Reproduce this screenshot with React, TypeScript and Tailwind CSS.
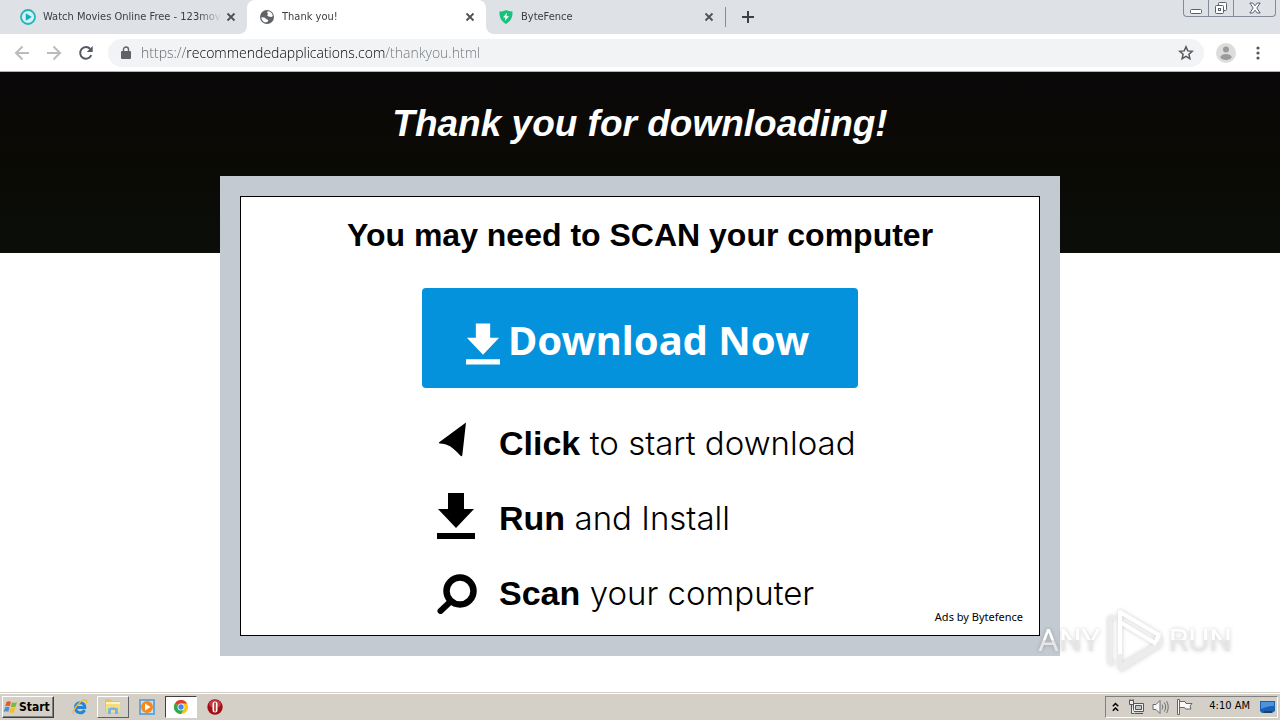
import React, { ReactNode } from "react";

type TabProps = {
  title: string;
  icon: ReactNode;
  className?: string;
};

const CloseIcon = () => (
  <svg width="10" height="10" viewBox="0 0 10 10" stroke="#4d5156" strokeWidth="1.8">
    <path d="M1.5 1.5l7 7M8.5 1.5l-7 7" />
  </svg>
);

const Tab = ({ title, icon, className }: TabProps) => (
  <div className={`flex h-[34px] w-[239px] items-center pr-[11px] pl-3 ${className ?? ""}`}>
    <span className="mr-[7px] shrink-0">{icon}</span>
    <span className="flex-1 overflow-hidden mask-r-from-[155px] font-['DejaVu_Sans_Condensed','Noto_Sans',sans-serif] text-[11px] leading-4 whitespace-nowrap text-[#3c4043]">
      {title}
    </span>
    <button type="button" aria-label={`Close ${title}`} className="ml-1 shrink-0">
      <CloseIcon />
    </button>
  </div>
);

const PlayIcon = () => (
  <svg width="16" height="16" viewBox="0 0 16 16">
    <circle cx="8" cy="8" r="7" fill="#d5f1f1" stroke="#20b5bb" strokeWidth="1.8" />
    <path d="M5.8 4.3v7.4L11.8 8z" fill="#14a9c4" />
  </svg>
);

const GlobeIcon = () => (
  <svg width="16" height="16" viewBox="0 0 16 16">
    <circle cx="8" cy="8" r="7" fill="#5f6368" />
    <path d="M8.5 2.2c2.8 0 5 2 5.3 4.8-.8.9-1.6 1.2-2.6.8L9.500 7.500 8 6.200l1.200-1.300-1-1zM2.300 8.200l3.200.4 2.500 1.800 1.300.6-.6 1.700-2.500.8C3.800 12.500 2.400 10.600 2.300 8.200z" fill="#fff" />
  </svg>
);

const ShieldIcon = () => (
  <svg width="16" height="16" viewBox="0 0 16 16">
    <path d="M8 1c2 1.100 4.200 1.500 6.500 1.500.3 5.500-1.500 9.500-6.500 12.500C3 12 1.200 8 1.500 2.500 3.800 2.500 6 2.100 8 1z" fill="#17c37b" />
    <path d="M9 3.800L5 8.500h2.500L6.800 12 11 7.200H8.400z" fill="#fff" />
  </svg>
);

const DownloadIcon = ({ className }: { className?: string }) => (
  <svg viewBox="0 0 38 46" fill="currentColor" className={className}>
    <path d="M11 0h16v16h10L19 35 1 16h10zM0 40h38v6H0z" />
  </svg>
);

const PointerIcon = () => (
  <svg width="40" height="46" viewBox="0 0 40 46">
    <path d="M29 4.500L2.500 24c-1 .8-.8 1.300.3 1.500 8 .6 12.500 3 20.500 12 .8.9 1.800.9 2-.3z" />
  </svg>
);

const SearchIcon = () => (
  <svg width="40" height="46" viewBox="0 0 40 46" fill="none" stroke="#000">
    <circle cx="23" cy="23" r="13.500" strokeWidth="6.500" />
    <path d="M13 34L3.500 43" strokeWidth="6" strokeLinecap="round" />
  </svg>
);

const Watermark = () => (
  <div className="pointer-events-none absolute right-12 bottom-4 flex h-[72px] w-[194px] items-center justify-between font-['Roboto',sans-serif] text-[32px] leading-[38px] drop-shadow-[0_0_2px_rgba(0,0,0,0.2)]">
    <span className="bg-linear-to-b from-white from-50% to-[#e6e6e6] to-50% bg-clip-text text-transparent">ANY</span>
    <svg width="56" height="64" viewBox="0 0 56 64" fill="none" strokeLinejoin="round" className="shrink-0">
      <path d="M7 55H3V10h5M13 40v18l36-21" stroke="#ececec" strokeWidth="4" />
      <path d="M13 62l40-25v-8" stroke="#ececec" strokeWidth="4" />
      <path d="M13 46V4l39 23-4 8L13 14" stroke="#fff" strokeWidth="4" />
    </svg>
    <span className="bg-linear-to-b from-white from-50% to-[#e6e6e6] to-50% bg-clip-text text-transparent">RUN</span>
  </div>
);

const steps = [
  { icon: <PointerIcon />, bold: "Click", text: "to start download" },
  { icon: <DownloadIcon className="h-[46px] w-[38px]" />, bold: "Run", text: "and Install" },
  { icon: <SearchIcon />, bold: "Scan", text: "your computer" },
];

const BrowserChrome = () => (
  <header className="shrink-0 border-b border-[#b3b3b0] bg-white">
    <div className="flex h-[34px] bg-white">
      <div className="rounded-br-lg bg-[#dee1e6] pl-2">
        <Tab title="Watch Movies Online Free - 123movi" icon={<PlayIcon />} />
      </div>
      <div className="bg-[#dee1e6]">
        <Tab title="Thank you!" icon={<GlobeIcon />} className="rounded-t-lg bg-white" />
      </div>
      <div className="flex flex-1 items-center rounded-bl-lg bg-[#dee1e6]">
        <Tab title="ByteFence" icon={<ShieldIcon />} />
        <div className="h-5 w-px bg-[#878b90]" />
        <button type="button" aria-label="New tab" className="ml-[15px]">
          <svg width="14" height="14" viewBox="0 0 14 14" stroke="#3c4043" strokeWidth="2">
            <path d="M7 1v12M1 7h12" />
          </svg>
        </button>
        <div className="mr-1 ml-auto flex h-[17px] self-start rounded-b-[4px] border border-t-0 border-[#868b98]">
          <button type="button" aria-label="Minimize" className="flex w-[25px] items-center justify-center border-r border-[#868b98]">
            <svg width="12" height="14" viewBox="0 0 12 14" fill="#fff" stroke="#5a5f6c">
              <rect x=".5" y="8.500" width="11" height="4" rx="1" />
            </svg>
          </button>
          <button type="button" aria-label="Restore" className="flex w-[25px] items-center justify-center border-r border-[#868b98]">
            <svg width="14" height="14" viewBox="0 0 14 14" fill="#fff" stroke="#5a5f6c">
              <rect x="4.500" y="1.500" width="8" height="8" rx="1" />
              <rect x="1.500" y="4.500" width="8" height="8" rx="1" />
              <rect x="4.500" y="7.500" width="2" height="2" />
            </svg>
          </button>
          <button type="button" aria-label="Close" className="flex w-[41px] items-center justify-center">
            <svg width="12" height="12" viewBox="0 0 12 12" fill="#fff" stroke="#5a5f6c">
              <path d="M.8 1h3L6 3.800 8.200 1h3L7.800 6l3.400 5h-3L6 8.200 3.800 11h-3L4.200 6z" />
            </svg>
          </button>
        </div>
      </div>
    </div>

    <div className="flex h-[37px] items-center px-3">
      <button type="button" aria-label="Back" className="w-8 pl-[2px]">
        <svg width="16" height="16" viewBox="0 0 16 16" fill="none" stroke="#bbbcbe" strokeWidth="2">
          <path d="M15 8H2.500M8.500 1.500L2 8l6.500 6.500" />
        </svg>
      </button>
      <button type="button" aria-label="Forward" className="w-8 pl-[2px]">
        <svg width="16" height="16" viewBox="0 0 16 16" fill="none" stroke="#bbbcbe" strokeWidth="2">
          <path d="M1 8h12.500M7.500 1.500L14 8l-6.500 6.500" />
        </svg>
      </button>
      <button type="button" aria-label="Reload" className="w-8 pl-[2px]">
        <svg width="16" height="16" viewBox="0 0 16 16" fill="none" stroke="#55595e" strokeWidth="2">
          <path d="M13.300 10.200A5.800 5.800 0 1 1 12.300 4" />
          <path d="M14.700 1v6H8.800z" fill="#55595e" stroke="none" />
        </svg>
      </button>
      <div className="flex h-7 flex-1 items-center rounded-full bg-[#f1f3f4] pr-[10px] pl-[13px]">
        <svg width="10" height="13" viewBox="0 0 10 13" className="shrink-0">
          <path d="M2.500 6V3.500a2.500 2.500 0 0 1 5 0V6" fill="none" stroke="#5f6368" strokeWidth="1.400" />
          <rect y="5" width="10" height="8" rx="1" fill="#5f6368" />
        </svg>
        <input
          type="text"
          aria-label="Address"
          defaultValue="https://recommendedapplications.com/thankyou.html"
          className="ml-[10px] h-6 flex-1 bg-[linear-gradient(90deg,#5f6368_45px,#000_45px,#000_244px,#6f7478_244px)] bg-clip-text font-['Open_Sans',sans-serif] text-[14px] font-light text-transparent outline-none"
        />
        <button type="button" aria-label="Bookmark">
          <svg width="16" height="16" viewBox="0 0 16 16" fill="none" stroke="#55595e" strokeWidth="1.500">
            <path d="M8 1.800l1.800 4.100 4.500.4-3.400 3 1 4.400L8 11.400l-3.900 2.300 1-4.400-3.400-3 4.500-.4z" />
          </svg>
        </button>
      </div>
      <button type="button" aria-label="Profile" className="ml-3">
        <svg width="20" height="20" viewBox="0 0 20 20">
          <circle cx="10" cy="10" r="10" fill="#dcdcdc" />
          <circle cx="10" cy="6.500" r="3" fill="#9a9a9a" />
          <ellipse cx="10" cy="14" rx="5.600" ry="3" fill="#9a9a9a" />
        </svg>
      </button>
      <button type="button" aria-label="Menu" className="mr-2 ml-5">
        <svg width="4" height="14" viewBox="0 0 4 14" fill="#55595e">
          <circle cx="2" cy="2" r="1.600" />
          <circle cx="2" cy="7" r="1.600" />
          <circle cx="2" cy="12" r="1.600" />
        </svg>
      </button>
    </div>
  </header>
);

const Taskbar = () => (
  <footer className="flex h-7 shrink-0 items-center border-t border-[#d4d0c8] bg-[#d4d0c8] px-[2px] font-['DejaVu_Sans_Condensed','Noto_Sans',sans-serif] text-[11px] text-black shadow-[inset_0_1px_0_#fff]">
    <button type="button" className="flex h-[22px] w-[52px] items-center border border-t-white border-r-[#404040] border-b-[#404040] border-l-white text-[12px] font-bold shadow-[inset_-1px_-1px_0_#808080]">
      <svg width="16" height="16" viewBox="0 0 16 16" className="shrink-0">
        <path d="M3.500 3C5 1.800 6.500 2 8 2.800L6.800 7.300C5.200 6.500 3.800 6.500 2.200 7.500z" fill="#e8592b" />
        <path d="M9 3.200c1.700.9 3.200.9 5-.2l-1.300 4.500c-1.700 1.100-3.200 1.100-4.900.2z" fill="#7fb93c" />
        <path d="M2 8.500c1.500-1 3-1 4.600-.2l-1.200 4.500C3.800 12 2.300 12 .7 13z" fill="#4a90d9" />
        <path d="M7.500 8.700c1.700.9 3.200.9 4.900-.2L11.100 13c-1.700 1.100-3.200 1.100-4.900.2z" fill="#f5bd28" />
      </svg>
      Start
    </button>
    <button type="button" aria-label="Internet Explorer" className="ml-[18px]">
      <svg width="16" height="16" viewBox="0 0 16 16" fill="none">
        <path d="M4 8.500h8.800C12.800 2 3.500 2 3.500 8.500c0 6 7 6.800 9 2.500" stroke="#2586d8" strokeWidth="3" />
        <path d="M1.800 14.800C-1.500 13 10-1.500 14.200 1.200c1 .8.600 2-.2 3.300" stroke="#edbd35" strokeWidth="1.400" />
      </svg>
    </button>
    <button type="button" aria-label="File Explorer" className="ml-[9px] flex h-[22px] w-8 items-center justify-center border border-t-white border-r-[#606060] border-b-[#606060] border-l-white">
      <svg width="18" height="17" viewBox="0 0 18 17">
        <path d="M1 1h6l1 2h8v11H1z" fill="#e6c35c" />
        <path d="M2 4h14v5H2z" fill="#fff3bc" />
        <path d="M2 6h14v8H2z" fill="#f4dc83" />
        <path d="M4 16v-5c0-2 10-2 10 0v5h-3v-4H7v4z" fill="#74b8df" />
      </svg>
    </button>
    <button type="button" aria-label="Media Player" className="ml-[10px]">
      <svg width="16" height="16" viewBox="0 0 16 16">
        <path d="M0 0h16v16H0z" fill="#6ba5d7" />
        <path d="M2 2h12v12H2z" fill="#c9e2f4" />
        <circle cx="8" cy="8" r="6" fill="#f58a19" />
        <path d="M6 4.500v7L11.500 8z" fill="#fff" />
      </svg>
    </button>
    <button type="button" aria-label="Chrome" className="ml-[10px] flex h-[22px] w-8 items-center justify-center border border-t-[#404040] border-r-white border-b-white border-l-[#404040] bg-white">
      <svg width="14" height="14" viewBox="0 0 14 14">
        <circle cx="7" cy="7" r="7" fill="#fbc116" />
        <path d="M7 7L.9 3.500A7 7 0 0 1 13.100 3.500z" fill="#e33b2e" />
        <path d="M7 7L.9 3.500A7 7 0 0 0 7 14l3-5.200z" fill="#2da94f" />
        <path d="M7 3.500h6.100l-3 5.300z" fill="#fbc116" />
        <circle cx="7" cy="7" r="3.500" fill="#fff" />
        <circle cx="7" cy="7" r="2.700" fill="#4385f4" />
      </svg>
    </button>
    <button type="button" aria-label="Opera" className="ml-[10px]">
      <svg width="16" height="16" viewBox="0 0 16 16">
        <circle cx="8" cy="8" r="7.700" fill="#a30d14" />
        <ellipse cx="8" cy="5" rx="6" ry="4" fill="#c23a40" />
        <rect x="5.500" y="2.500" width="5" height="11" rx="2.500" fill="#fff" />
        <rect x="7.200" y="3.500" width="1.600" height="9" fill="#b3272d" />
      </svg>
    </button>

    <div className="ml-auto flex h-[22px] items-center border border-t-[#808080] border-r-white border-b-white border-l-[#808080] pl-[6px]">
      <button type="button" aria-label="Show hidden icons">
        <svg width="7" height="10" viewBox="0 0 7 10" fill="none" stroke="#000" strokeWidth="1.500">
          <path d="M.8 4.200l2.700-2.700 2.700 2.700M.8 8.700l2.700-2.700 2.700 2.700" />
        </svg>
      </button>
      <svg width="16" height="16" viewBox="0 0 16 16" className="ml-[9px]" fill="#eee" stroke="#55555a">
        <path d="M5.500 4.500h10v8h-10zM7 14.500h8" />
        <path d="M7.500 6.500h6v4h-6z" fill="#c4c4c4" />
        <path d="M1.500 1.500h4v4h-4zM3.500 5.500v9h3M2 0v2M5 0v2" />
      </svg>
      <svg width="17" height="16" viewBox="0 0 17 16" className="ml-2" fill="none" stroke="#6a6a70">
        <path d="M1 5.500h3l4-4v13l-4-4H1z" fill="#f7f7f7" />
        <path d="M10 5.500c1 1.500 1 3.500 0 5M12.300 3.500c1.800 2.500 1.800 6.500 0 9M14.500 2c2.200 3.500 2.200 8.500 0 12" />
      </svg>
      <svg width="17" height="16" viewBox="0 0 17 16" className="ml-[7px]" fill="#fafafa" stroke="#66666b">
        <path d="M1.500.5h2v15h-2zM3.500 2.500h5.500l1 2h6l-2 2.500 1 3H9.500l-1-1.500h-5z" />
      </svg>
      <time className="ml-4">4:10 AM</time>
      <svg width="18" height="16" viewBox="0 0 18 16" className="ml-[9px]">
        <path d="M1 2h15v10l-3 2H3L1 12z" fill="#1b5fb0" />
        <path d="M2 3h13v4c-4 0-8 1-13 3z" fill="#4d92dc" />
        <path d="M5 12h8v2H5z" fill="#20406b" />
      </svg>
    </div>
  </footer>
);

const App = () => {
  return (
    <div className="flex min-h-screen flex-col bg-white font-['Liberation_Sans',Arial,sans-serif] text-black">
      <BrowserChrome />

      <main className="relative flex-1">
        <div className="h-[181px] bg-linear-to-b from-[#0b0809] via-[#0a0a05] to-[#0a0e09] pt-[31px] text-center">
          <h1 className="text-[37px] leading-[42px] font-bold text-white italic">Thank you for downloading!</h1>
        </div>

        <section className="mx-auto -mt-[77px] w-full max-w-[840px] bg-[#c3cad1] p-5">
          <div className="relative flex min-h-[440px] flex-col items-center border border-black bg-white pt-5">
            <h2 className="text-[32px] leading-9 font-bold">You may need to SCAN your computer</h2>
            <button
              type="button"
              className="mt-[35px] flex h-[100px] w-[436px] items-center rounded-[4px] bg-[#0492dd] pt-1 pl-11 font-['Noto_Sans',sans-serif] text-[40px] leading-none font-bold text-white"
            >
              <DownloadIcon className="mt-2 mr-2 h-[42px] w-[34px] shrink-0" />
              Download Now
            </button>
            <ul className="mt-[17px] w-[436px] pl-[15px]">
              {steps.map((step) => (
                <li key={step.bold} className="flex h-[75px] items-center whitespace-nowrap">
                  <span className="flex w-[62px] shrink-0 items-center pb-1">{step.icon}</span>
                  <span className="text-[34px] leading-10">
                    <b>{step.bold}</b>{" "}
                    <span className="font-['Inter',sans-serif] text-[33px] font-light">{step.text}</span>
                  </span>
                </li>
              ))}
            </ul>
            <p className="absolute right-4 bottom-2 font-['Noto_Sans',sans-serif] text-[11px] leading-5">Ads by Bytefence</p>
          </div>
        </section>
        <Watermark />
      </main>

      <Taskbar />
    </div>
  );
};

export default App;
